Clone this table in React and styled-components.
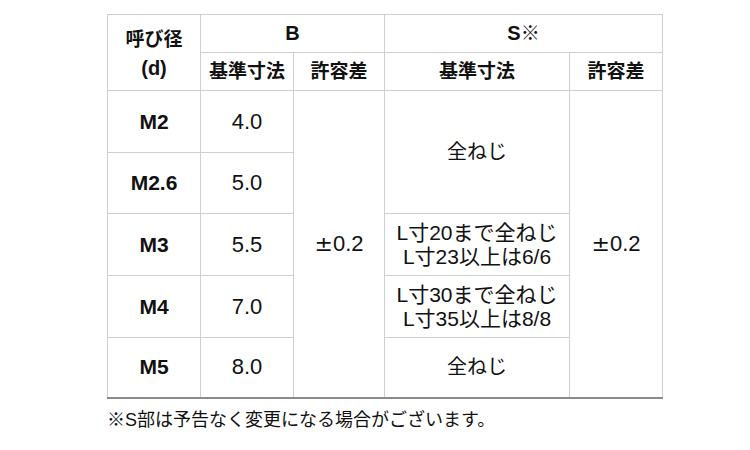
import React from "react";
import styled, { createGlobalStyle } from "styled-components";

const GlobalStyle = createGlobalStyle`
    html, body {
        margin: 0;
        padding: 0;
        background: #fff;
    }
    body {
        font-family: "Liberation Sans", "Noto Sans CJK JP", sans-serif;
        color: #111;
    }
`

const rows = [
    { size: "M2", base: "4.0" },
    { size: "M2.6", base: "5.0" },
    { size: "M3", base: "5.5" },
    { size: "M4", base: "7.0" },
    { size: "M5", base: "8.0" },
];

const heights = [62, 61, 62, 62, 60];

function Tolerance(){
    return <><PlusMinus>±</PlusMinus>0.2</>
}

function App(){
    return(
        <>
            <GlobalStyle />
            <Page>
                <Table>
                    <colgroup>
                        <col style={{ width: 93 }} />
                        <col style={{ width: 93 }} />
                        <col style={{ width: 91 }} />
                        <col style={{ width: 185 }} />
                        <col style={{ width: 93 }} />
                    </colgroup>
                    <thead>
                        <HeadRow>
                            <Th rowSpan={2} $tall>呼び径<br /><Paren>(d)</Paren></Th>
                            <Th colSpan={2}><Letter>B</Letter></Th>
                            <Th colSpan={2}><Letter>S</Letter><Mark>※</Mark></Th>
                        </HeadRow>
                        <HeadRow>
                            <Th>基準寸法</Th>
                            <Th>許容差</Th>
                            <Th>基準寸法</Th>
                            <Th>許容差</Th>
                        </HeadRow>
                    </thead>
                    <tbody>
                        {rows.map((r, i) => (
                            <tr key={r.size} style={{ height: heights[i] }}>
                                <SizeCell>{r.size}</SizeCell>
                                <Td>{r.base}</Td>
                                {i === 0 && <Td rowSpan={5}><Tolerance /></Td>}
                                {i === 0 && <Td rowSpan={2} $size={20}>全ねじ</Td>}
                                {i === 2 && <Td $size={21}>L寸20まで全ねじ<br />L寸23以上は6/6</Td>}
                                {i === 3 && <Td $size={21}>L寸30まで全ねじ<br />L寸35以上は8/8</Td>}
                                {i === 4 && <Td $size={20}>全ねじ</Td>}
                                {i === 0 && <Td rowSpan={5}><Tolerance /></Td>}
                            </tr>
                        ))}
                    </tbody>
                </Table>
                <Note>※S部は予告なく変更になる場合がございます。</Note>
            </Page>
        </>
    )
}

export default App;

const Page = styled.div`
    padding: 14px 0 0 107px;
`

const Table = styled.table`
    border-collapse: collapse;
    table-layout: fixed;
    width: 555px;
    border-top: 1px solid #9a9a9a;
    border-bottom: 2px solid #8a8a8a;
    border-left: 1px solid #333;
    border-right: 1px solid #333;
`

const HeadRow = styled.tr`
    height: 38px;
`

const Th = styled.th`
    border: 1px solid #cfcfcf;
    padding: ${p => p.$tall ? "3px 0 0" : "0"};
    font-size: 19px;
    font-weight: bold;
    line-height: ${p => p.$tall ? "28px" : "22px"};
    text-align: center;
    vertical-align: middle;
`

const Letter = styled.span`
    font-size: 20px;
`

const Paren = styled.span`
    font-size: 20px;
`

const Mark = styled.span`
    font-weight: normal;
`

const PlusMinus = styled.span`
    font-family: "DejaVu Sans", sans-serif;
    font-size: 22px;
`

const Td = styled.td`
    border: 1px solid #cfcfcf;
    padding: 0;
    font-size: ${p => p.$size || 22}px;
    line-height: 24px;
    text-align: center;
    vertical-align: middle;
    white-space: nowrap;
`

const SizeCell = styled(Td)`
    font-weight: bold;
    font-size: 21px;
`

const Note = styled.div`
    margin-top: 9px;
    font-size: 18px;
    line-height: 24px;
`
